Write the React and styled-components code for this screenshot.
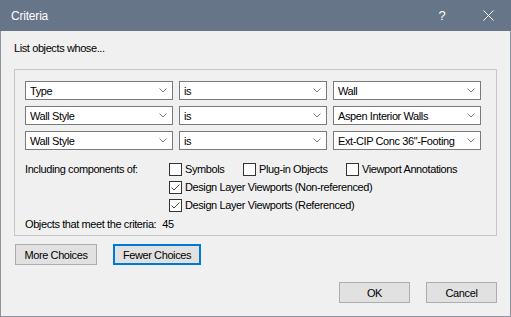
import React from "react";
import styled, { createGlobalStyle } from "styled-components";

const Global = createGlobalStyle`
  html, body { margin: 0; padding: 0; background: #f0f0f0; }
  body { font-family: "Liberation Sans", Arial, sans-serif; font-size: 11px; letter-spacing: -0.4px; color: #000; }
`;

const Window = styled.div`
  width: 511px;
  height: 317px;
  box-sizing: border-box;
  border: 1px solid #8d949e;
  border-top: none;
  background: #f0f0f0;
  display: flex;
  flex-direction: column;
`;

const TitleBar = styled.div`
  height: 31px;
  margin: 0 -1px;
  background: #677589;
  color: #fff;
  display: flex;
  align-items: center;
  padding: 0 0 0 11px;
  font-size: 12px;
  letter-spacing: -0.2px;
`;

const TitleText = styled.div`
  flex: 1;
`;

const TitleButton = styled.div`
  width: 46px;
  height: 31px;
  display: flex;
  align-items: center;
  justify-content: center;
  font-size: 13px;
`;

const Body = styled.div`
  padding: 10px 13px 0 13px;
  display: flex;
  flex-direction: column;
`;

const Intro = styled.div`
  height: 14px;
  line-height: 14px;
`;

const GroupBox = styled.div`
  margin-top: 14px;
  height: 167px;
  box-sizing: border-box;
  border: 1px solid #c6c6c6;
  padding: 11px 10px 0 10px;
  display: flex;
  flex-direction: column;
`;

const CriteriaGrid = styled.div`
  display: grid;
  grid-template-columns: repeat(3, 148px);
  grid-auto-rows: 19px;
  column-gap: 6px;
  row-gap: 6px;
`;

const Select = styled.div`
  box-sizing: border-box;
  border: 1px solid #7a7a7a;
  background: #fff;
  display: flex;
  align-items: center;
  padding: 0 0 0 4px;
  white-space: nowrap;
  overflow: hidden;
`;

const SelectText = styled.span`
  flex: 1;
  overflow: hidden;
`;

const Chevron = styled.svg`
  width: 8px;
  height: 5px;
  margin: 0 5px 0 4px;
  flex: none;
`;

const Options = styled.div`
  margin-top: 10px;
  display: grid;
  grid-template-columns: 144px 1fr;
  grid-auto-rows: 18px;
`;

const OptionsLabel = styled.div`
  display: flex;
  align-items: center;
`;

const CheckRow = styled.div`
  grid-column: 2;
  display: flex;
  align-items: center;
`;

const CheckItem = styled.label`
  display: flex;
  align-items: center;
  width: ${(p) => (p.$w ? `${p.$w}px` : "auto")};
  white-space: nowrap;
`;

const Box = styled.span`
  width: 13px;
  height: 13px;
  box-sizing: border-box;
  border: 1px solid #333;
  background: #fff;
  margin-right: 3px;
  display: flex;
  align-items: center;
  justify-content: center;
`;

const Count = styled.div`
  margin-top: 4px;
  display: flex;
  gap: 6px;
`;

const ButtonRow = styled.div`
  margin-top: 8px;
  display: flex;
  gap: 16px;
  padding-left: 1px;
`;

const Button = styled.div`
  box-sizing: border-box;
  width: ${(p) => p.$w}px;
  height: 21px;
  background: #e1e1e1;
  border: ${(p) => (p.$focus ? "2px solid #0078d7" : "1px solid #adadad")};
  display: flex;
  align-items: center;
  justify-content: center;
`;

const Footer = styled.div`
  margin-top: 17px;
  display: flex;
  justify-content: flex-end;
  gap: 16px;
`;

const Down = () => (
  <Chevron viewBox="0 0 8 5">
    <path d="M0.5 0.5 L4 4 L7.5 0.5" fill="none" stroke="#808080" strokeWidth="1" />
  </Chevron>
);

const Check = ({ checked, children, w }) => (
  <CheckItem $w={w}>
    <Box>
      {checked && (
        <svg width="11" height="11" viewBox="0 0 11 11">
          <path d="M1.5 5.5 L4 8 L9.5 2.5" fill="none" stroke="#444" strokeWidth="1" />
        </svg>
      )}
    </Box>
    {children}
  </CheckItem>
);

const rows = [
  ["Type", "is", "Wall"],
  ["Wall Style", "is", "Aspen Interior Walls"],
  ["Wall Style", "is", "Ext-CIP Conc 36\"-Footing"],
];

export default function App() {
  return (
    <>
      <Global />
      <Window>
        <TitleBar>
          <TitleText>Criteria</TitleText>
          <TitleButton>?</TitleButton>
          <TitleButton>
            <svg width="11" height="11" viewBox="0 0 11 11">
              <path d="M0.5 0.5 L10.5 10.5 M10.5 0.5 L0.5 10.5" stroke="#fff" strokeWidth="1" />
            </svg>
          </TitleButton>
        </TitleBar>
        <Body>
          <Intro>List objects whose...</Intro>
          <GroupBox>
            <CriteriaGrid>
              {rows.flat().map((t, i) => (
                <Select key={i}>
                  <SelectText>{t}</SelectText>
                  <Down />
                </Select>
              ))}
            </CriteriaGrid>
            <Options>
              <OptionsLabel>Including components of:</OptionsLabel>
              <CheckRow>
                <Check w={74}>Symbols</Check>
                <Check w={103}>Plug-in Objects</Check>
                <Check>Viewport Annotations</Check>
              </CheckRow>
              <CheckRow>
                <Check checked>Design Layer Viewports (Non-referenced)</Check>
              </CheckRow>
              <CheckRow>
                <Check checked>Design Layer Viewports (Referenced)</Check>
              </CheckRow>
            </Options>
            <Count>
              <span>Objects that meet the criteria:</span>
              <span>45</span>
            </Count>
          </GroupBox>
          <ButtonRow>
            <Button $w={82}>More Choices</Button>
            <Button $w={88} $focus>Fewer Choices</Button>
          </ButtonRow>
          <Footer>
            <Button $w={71}>OK</Button>
            <Button $w={71}>Cancel</Button>
          </Footer>
        </Body>
      </Window>
    </>
  );
}
